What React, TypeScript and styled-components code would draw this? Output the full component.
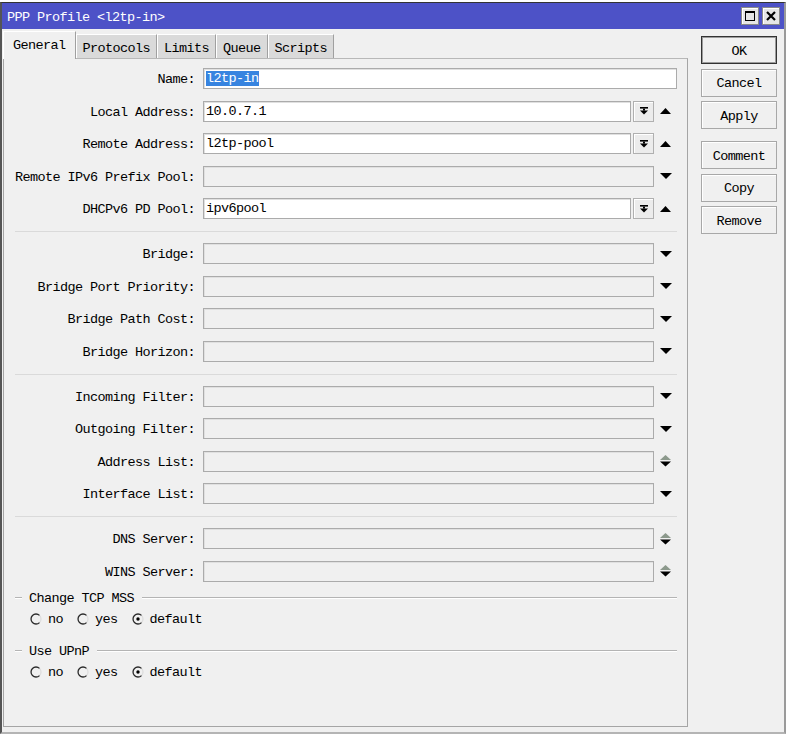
import React from "react";
import styled, { createGlobalStyle } from "styled-components";

const FONT = `"Liberation Mono", "DejaVu Sans Mono", monospace`;

const Global = createGlobalStyle`
  html, body { margin: 0; padding: 0; background: #ffffff; }
  body {
    font-family: ${FONT};
    font-size: 13.5px;
    letter-spacing: -0.6px;
    color: #000;
  }
  * { box-sizing: border-box; }
`;

const Backdrop = styled.div`
  width: 786px;
  height: 734px;
  padding-top: 2px;
  background: #fff;
  display: flex;
  flex-direction: column;
  overflow: hidden;
`;

const Window = styled.div`
  flex: 1;
  display: flex;
  flex-direction: column;
  background: #f0f0f0;
  border-top: 1px solid #333;
  border-left: 2px solid #555;
  border-right: 2px solid #9a9a9a;
  border-bottom: 2px solid #b4b4b4;
`;

const TitleBar = styled.div`
  height: 26px;
  flex: none;
  background: #4d52c7;
  color: #fff;
  display: flex;
  align-items: center;
  justify-content: space-between;
  padding: 0 4px 0 5px;
`;

const TitleText = styled.span`
  white-space: pre;
  padding-top: 2px;
`;

const TitleButtons = styled.div`
  display: flex;
  gap: 3px;
`;

const TitleButton = styled.div`
  width: 18px;
  height: 18px;
  background: #e6e6e6;
  border: 1px solid #8a8a8a;
  box-shadow: inset 1px 1px 0 #fff;
  display: grid;
  place-items: center;
`;

const Body = styled.div`
  flex: 1;
  display: flex;
`;

const LeftCol = styled.div`
  width: 686px;
  padding-left: 1px;
  display: flex;
  flex-direction: column;
`;

const Tabs = styled.div`
  height: 29px;
  display: flex;
  align-items: flex-end;
  position: relative;
  z-index: 1;
`;

const Tab = styled.div<{ $active?: boolean }>`
  white-space: pre;
  border-top: 1px solid #fff;
  border-left: 1px solid #fff;
  border-right: 1px solid #a0a0a0;
  ${(p) =>
    p.$active
      ? `
    height: 28px;
    margin-bottom: -1px;
    padding: 1px 9px 0;
    line-height: 26px;
    background: #f0f0f0;
  `
      : `
    height: 24px;
    padding: 3px 6px 0;
    line-height: 21px;
    background: #dadada;
  `}
`;

const Panel = styled.div`
  flex: 1;
  margin-bottom: 5px;
  border: 1px solid #a5a5a5;
  border-top-color: #b8b8b8;
  padding: 9px 10px 0 11px;
  display: flex;
  flex-direction: column;
`;

const Section = styled.div`
  display: flex;
  flex-direction: column;
  gap: 11.5px;
`;

const Separator = styled.div`
  border-top: 1px solid #dadada;
  margin: 12px 0 11px;
`;

const Row = styled.div`
  height: 21px;
  display: grid;
  grid-template-columns: 180px 1fr;
  column-gap: 8px;
  align-items: center;
`;

const Label = styled.div`
  text-align: right;
  white-space: pre;
  padding-top: 2px;
`;

const Field = styled.div`
  display: flex;
  height: 21px;
`;

const Input = styled.div<{ $disabled?: boolean }>`
  flex: 1;
  height: 21px;
  border: 1px solid #ababab;
  box-shadow: inset 1px 1px 0 #e0e0e0;
  background: ${(p) => (p.$disabled ? "#f0f0f0" : "#fff")};
  padding: 1px 0 0 2px;
  line-height: 18px;
  white-space: pre;
  overflow: hidden;
`;

const Selected = styled.span`
  background: #3784e0;
  color: #fff;
`;

const DropButton = styled.div`
  width: 21px;
  margin-left: 2px;
  border: 1px solid #b0b0b0;
  box-shadow: inset 1px 1px 0 #fff;
  background: #ececec;
  display: grid;
  place-items: center;
`;

const ArrowSlot = styled.div`
  width: 23px;
  display: grid;
  place-items: center;
`;

const GroupBox = styled.div<{ $top: number }>`
  margin-top: ${(p) => p.$top}px;
  display: flex;
  flex-direction: column;
`;

const GroupHeader = styled.div`
  height: 14px;
  display: flex;
  align-items: center;
`;

const GroupLine = styled.div<{ $grow?: boolean }>`
  ${(p) => (p.$grow ? "flex: 1;" : "width: 7px;")}
  border-top: 1px solid #b4b4b4;
  border-bottom: 1px solid #fff;
`;

const GroupTitle = styled.span`
  margin: 0 8px 0 7px;
  padding-top: 1px;
  white-space: pre;
`;

const RadioRow = styled.div`
  margin-top: 6px;
  height: 16px;
  padding-left: 15px;
  display: flex;
  align-items: center;
  gap: 14px;
`;

const RadioItem = styled.label`
  display: flex;
  align-items: center;
  gap: 6px;
  white-space: pre;
`;

const RadioText = styled.span`
  padding-top: 2px;
`;

const ButtonCol = styled.div`
  flex: 1;
  padding: 7px 0 0 13px;
  display: flex;
  flex-direction: column;
  gap: 4.5px;
`;

const Button = styled.div<{ $default?: boolean; $spaced?: boolean }>`
  width: 76px;
  height: 28px;
  padding-top: 2px;
  background: #f0f0f0;
  display: grid;
  place-items: center;
  white-space: pre;
  ${(p) => (p.$spaced ? "margin-top: 7.5px;" : "")}
  ${(p) =>
    p.$default
      ? `border: 1px solid #333; box-shadow: inset 0 0 0 1px #9c9c9c;`
      : `border: 1px solid #a8a8a8; box-shadow: inset 1px 1px 0 #fff;`}
`;

/* ---------- icons ---------- */

const MaxIcon = () => (
  <svg width="12" height="12" viewBox="0 0 12 12">
    <rect x="1.5" y="1.5" width="9" height="9" fill="none" stroke="#000" strokeWidth="1" />
    <rect x="1" y="1" width="10" height="2" fill="#000" />
  </svg>
);

const CloseIcon = () => (
  <svg width="12" height="12" viewBox="0 0 12 12">
    <path d="M2 2 L10 10 M10 2 L2 10" stroke="#000" strokeWidth="2.2" />
  </svg>
);

const DropIcon = () => (
  <svg width="8" height="8" viewBox="0 0 8 8">
    <rect x="0" y="0" width="8" height="1.6" fill="#000" />
    <rect x="3" y="1.6" width="2" height="2" fill="#000" />
    <polygon points="0,3.4 8,3.4 4,7.6" fill="#000" />
  </svg>
);

const UpIcon = () => (
  <svg width="11" height="6" viewBox="0 0 11 6">
    <polygon points="0,6 11,6 5.5,0" fill="#000" />
  </svg>
);

const DownIcon = () => (
  <svg width="12" height="6" viewBox="0 0 12 6">
    <polygon points="0,0 12,0 6,6" fill="#000" />
  </svg>
);

const UpDownIcon = () => (
  <svg width="11" height="12" viewBox="0 0 11 12">
    <polygon points="0,5 11,5 5.5,0" fill="#8c998c" />
    <polygon points="0,6.5 11,6.5 5.5,11.5" fill="#000" />
  </svg>
);

const RadioIcon = ({ checked }: { checked?: boolean }) => (
  <svg width="12" height="12" viewBox="0 0 12 12">
    <path d="M9.5 2.4 A5 5 0 0 1 9.5 9.6" fill="none" stroke="#dcdcdc" strokeWidth="1.2" />
    <path d="M9.5 2.4 A5 5 0 1 0 9.5 9.6" fill="none" stroke="#2a2a2a" strokeWidth="1.3" />
    {checked && <circle cx="6" cy="6" r="1.7" fill="#000" />}
  </svg>
);

/* ---------- data ---------- */

type Kind = "up" | "down" | "updown";

interface RowDef {
  label: string;
  value?: string;
  disabled?: boolean;
  drop?: boolean;
  arrow: Kind;
}

const arrowFor = (k: Kind) =>
  k === "up" ? <UpIcon /> : k === "down" ? <DownIcon /> : <UpDownIcon />;

const group1: RowDef[] = [
  { label: "Local Address:", value: "10.0.7.1", drop: true, arrow: "up" },
  { label: "Remote Address:", value: "l2tp-pool", drop: true, arrow: "up" },
  { label: "Remote IPv6 Prefix Pool:", disabled: true, arrow: "down" },
  { label: "DHCPv6 PD Pool:", value: "ipv6pool", drop: true, arrow: "up" },
];

const group2: RowDef[] = [
  { label: "Bridge:", disabled: true, arrow: "down" },
  { label: "Bridge Port Priority:", disabled: true, arrow: "down" },
  { label: "Bridge Path Cost:", disabled: true, arrow: "down" },
  { label: "Bridge Horizon:", disabled: true, arrow: "down" },
];

const group3: RowDef[] = [
  { label: "Incoming Filter:", disabled: true, arrow: "down" },
  { label: "Outgoing Filter:", disabled: true, arrow: "down" },
  { label: "Address List:", disabled: true, arrow: "updown" },
  { label: "Interface List:", disabled: true, arrow: "down" },
];

const group4: RowDef[] = [
  { label: "DNS Server:", disabled: true, arrow: "updown" },
  { label: "WINS Server:", disabled: true, arrow: "updown" },
];

const FormRow = ({ def }: { def: RowDef }) => (
  <Row>
    <Label>{def.label}</Label>
    <Field>
      <Input $disabled={def.disabled}>{def.value ?? ""}</Input>
      {def.drop && (
        <DropButton>
          <DropIcon />
        </DropButton>
      )}
      <ArrowSlot>{arrowFor(def.arrow)}</ArrowSlot>
    </Field>
  </Row>
);

const RadioGroup = ({ title, top }: { title: string; top: number }) => (
  <GroupBox $top={top}>
    <GroupHeader>
      <GroupLine />
      <GroupTitle>{title}</GroupTitle>
      <GroupLine $grow />
    </GroupHeader>
    <RadioRow>
      <RadioItem>
        <RadioIcon />
        <RadioText>no</RadioText>
      </RadioItem>
      <RadioItem>
        <RadioIcon />
        <RadioText>yes</RadioText>
      </RadioItem>
      <RadioItem>
        <RadioIcon checked />
        <RadioText>default</RadioText>
      </RadioItem>
    </RadioRow>
  </GroupBox>
);

export default function App() {
  return (
    <>
      <Global />
      <Backdrop>
        <Window>
          <TitleBar>
            <TitleText>{"PPP Profile <l2tp-in>"}</TitleText>
            <TitleButtons>
              <TitleButton>
                <MaxIcon />
              </TitleButton>
              <TitleButton>
                <CloseIcon />
              </TitleButton>
            </TitleButtons>
          </TitleBar>
          <Body>
            <LeftCol>
              <Tabs>
                <Tab $active>General</Tab>
                <Tab>Protocols</Tab>
                <Tab>Limits</Tab>
                <Tab>Queue</Tab>
                <Tab>Scripts</Tab>
              </Tabs>
              <Panel>
                <Section>
                  <Row>
                    <Label>Name:</Label>
                    <Field>
                      <Input>
                        <Selected>l2tp-in</Selected>
                      </Input>
                    </Field>
                  </Row>
                  {group1.map((d) => (
                    <FormRow key={d.label} def={d} />
                  ))}
                </Section>
                <Separator />
                <Section>
                  {group2.map((d) => (
                    <FormRow key={d.label} def={d} />
                  ))}
                </Section>
                <Separator />
                <Section>
                  {group3.map((d) => (
                    <FormRow key={d.label} def={d} />
                  ))}
                </Section>
                <Separator />
                <Section>
                  {group4.map((d) => (
                    <FormRow key={d.label} def={d} />
                  ))}
                </Section>
                <RadioGroup title="Change TCP MSS" top={9} />
                <RadioGroup title="Use UPnP" top={17} />
              </Panel>
            </LeftCol>
            <ButtonCol>
              <Button $default>OK</Button>
              <Button>Cancel</Button>
              <Button>Apply</Button>
              <Button $spaced>Comment</Button>
              <Button>Copy</Button>
              <Button>Remove</Button>
            </ButtonCol>
          </Body>
        </Window>
      </Backdrop>
    </>
  );
}
